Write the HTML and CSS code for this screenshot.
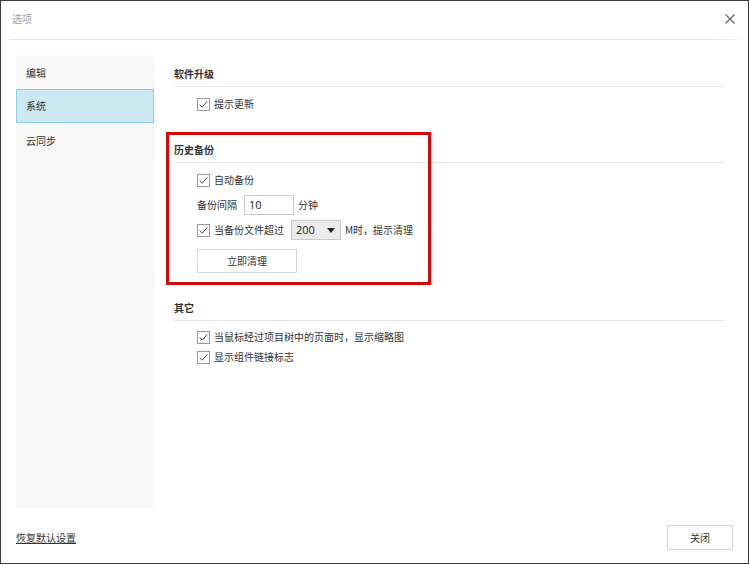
FILE: index.html
```html
<!DOCTYPE html>
<html lang="zh-CN">
<head>
<meta charset="utf-8">
<title>选项</title>
<link rel="stylesheet" href="styles.css">
</head>
<body>
<div class="window">
  <div class="titlebar">
    <span class="title">选项</span>
    <svg class="close" width="10" height="10" viewBox="0 0 10 10"><path d="M0.5 0.5 L9.5 9.5 M9.5 0.5 L0.5 9.5" stroke="#666" stroke-width="1.2" fill="none"/></svg>
  </div>
  <div class="rule"></div>
  <div class="body">
    <ul class="sidebar">
      <li class="nav-item">编辑</li>
      <li class="nav-item active">系统</li>
      <li class="nav-item">云同步</li>
    </ul>
    <div class="content">
      <section class="section first">
        <h3 class="heading">软件升级</h3>
        <label class="row check-row">
          <svg class="cb" width="13" height="13" viewBox="0 0 13 13"><rect x="0.5" y="0.5" width="12" height="12" fill="#fff" stroke="#999"/><path d="M2.8 6.6 L5.3 9.2 L10.2 3.4" stroke="#444" stroke-width="1" fill="none"/></svg>
          <span>提示更新</span>
        </label>
      </section>

      <section class="section history">
        <div class="highlight"></div>
        <h3 class="heading">历史备份</h3>
        <label class="row check-row">
          <svg class="cb" width="13" height="13" viewBox="0 0 13 13"><rect x="0.5" y="0.5" width="12" height="12" fill="#fff" stroke="#999"/><path d="M2.8 6.6 L5.3 9.2 L10.2 3.4" stroke="#444" stroke-width="1" fill="none"/></svg>
          <span>自动备份</span>
        </label>
        <div class="row field-row">
          <span>备份间隔</span>
          <span class="input">10</span>
          <span>分钟</span>
        </div>
        <div class="row field-row">
          <svg class="cb" width="13" height="13" viewBox="0 0 13 13"><rect x="0.5" y="0.5" width="12" height="12" fill="#fff" stroke="#999"/><path d="M2.8 6.6 L5.3 9.2 L10.2 3.4" stroke="#444" stroke-width="1" fill="none"/></svg>
          <span class="cb-label">当备份文件超过</span>
          <span class="select"><span>200</span><svg width="8" height="5" viewBox="0 0 8 5"><path d="M0 0 L8 0 L4 5 Z" fill="#222"/></svg></span>
          <span>M时，提示清理</span>
        </div>
        <button class="btn clean">立即清理</button>
      </section>

      <section class="section other">
        <h3 class="heading">其它</h3>
        <label class="row check-row">
          <svg class="cb" width="13" height="13" viewBox="0 0 13 13"><rect x="0.5" y="0.5" width="12" height="12" fill="#fff" stroke="#999"/><path d="M2.8 6.6 L5.3 9.2 L10.2 3.4" stroke="#444" stroke-width="1" fill="none"/></svg>
          <span>当鼠标经过项目树中的页面时，显示缩略图</span>
        </label>
        <label class="row check-row tight">
          <svg class="cb" width="13" height="13" viewBox="0 0 13 13"><rect x="0.5" y="0.5" width="12" height="12" fill="#fff" stroke="#999"/><path d="M2.8 6.6 L5.3 9.2 L10.2 3.4" stroke="#444" stroke-width="1" fill="none"/></svg>
          <span>显示组件链接标志</span>
        </label>
      </section>
    </div>
  </div>
  <div class="footer">
    <a class="reset">恢复默认设置</a>
    <button class="btn close-btn">关闭</button>
  </div>
</div>
</body>
</html>
```

FILE: styles.css
```css
* { box-sizing: border-box; }
html, body { margin: 0; padding: 0; background: #fff; }
body {
  font-family: "Noto Sans CJK SC", "Noto Sans", sans-serif;
  font-size: 10px;
  color: #333;
}
.window {
  width: 749px;
  height: 564px;
  border: 1px solid #3a3a3a;
  display: flex;
  flex-direction: column;
  background: #fff;
}
.titlebar {
  height: 38px;
  display: flex;
  align-items: center;
  justify-content: space-between;
  padding: 0 13px 2px 11px;
}
.title { color: #a0a0a0; font-size: 10px; line-height: 20px; }
.close { display: block; }
.rule {
  height: 1px;
  margin: 0 8px;
  background: linear-gradient(to right, #d2ece8 0%, #d2ece8 95%, #eef7f6 100%);
}
.body {
  flex: 1;
  display: flex;
  gap: 20px;
  padding: 15px 24px 0 15px;
}
.sidebar {
  list-style: none;
  margin: 0;
  padding: 0;
  width: 138px;
  background: #f8f8f8;
}
.nav-item {
  height: 34px;
  line-height: 34px;
  padding-left: 9px;
  border: 1px solid transparent;
}
.nav-item.active {
  line-height: 32px;
  background: #cce9f1;
  border-color: #86d1e2;
}
.content {
  flex: 1;
  padding-top: 2px;
}
.section { position: relative; }
.history { margin-top: 19px; }
.other { margin-top: 18px; }
.heading {
  margin: 0;
  font-size: 10px;
  font-weight: bold;
  line-height: 20px;
  padding: 7px 0 2px 0;
  border-bottom: 1px solid #e4e4e4;
}
.row {
  display: flex;
  align-items: center;
  height: 20px;
  line-height: 20px;
  padding-left: 23px;
}
.check-row { margin-top: 7px; }
.check-row.tight { margin-top: 0; }
.other .check-row:first-of-type { margin-top: 6px; }
.field-row { margin-top: 5px; }
.cb { display: block; margin-right: 4px; flex: none; }
.input {
  width: 50px;
  height: 20px;
  border: 1px solid #c8c8c8;
  margin: 0 4px 0 7px;
  padding-left: 4px;
  line-height: 18px;
  font-family: "Open Sans", "Noto Sans", sans-serif;
  font-size: 11px;
  color: #222;
}
.select {
  width: 50px;
  height: 20px;
  border: 1px solid #c8c8c8;
  background: #ececec;
  margin: 0 4px 0 7px;
  padding: 0 5px 0 4px;
  display: flex;
  align-items: center;
  justify-content: space-between;
  font-family: "Open Sans", "Noto Sans", sans-serif;
  font-size: 11px;
  color: #222;
}
.select svg { display: block; }
.btn {
  font-family: "Noto Sans CJK SC", sans-serif;
  font-size: 10px;
  color: #333;
  background: #fff;
  border: 1px solid #d6d6d6;
  padding: 0;
  line-height: 20px;
}
.clean {
  display: block;
  margin: 9px 0 0 23px;
  width: 100px;
  height: 24px;
}
.highlight {
  position: absolute;
  left: -8px;
  top: -1px;
  width: 265px;
  height: 153px;
  border: 3px solid #d10a0a;
  pointer-events: none;
}
.footer {
  height: 55px;
  display: flex;
  align-items: center;
  justify-content: space-between;
  padding: 4px 15px 0 15px;
}
.reset {
  text-decoration: underline;
  color: #333;
  line-height: 20px;
}
.close-btn {
  width: 66px;
  height: 25px;
}
```
